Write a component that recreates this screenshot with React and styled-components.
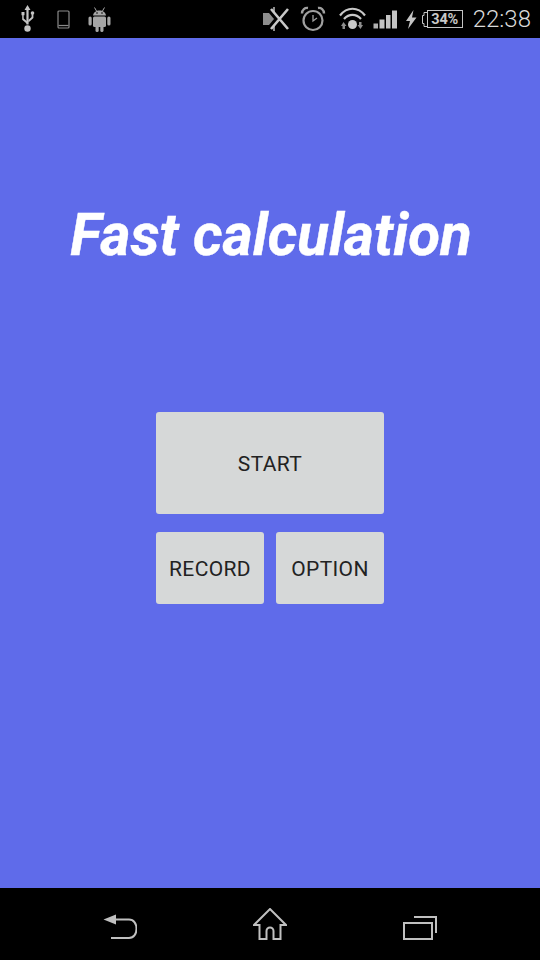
import React from "react";
import styled, { createGlobalStyle } from "styled-components";

const Global = createGlobalStyle`
  html, body { margin: 0; padding: 0; background: #000; }
  #root { width: 540px; height: 960px; }
`;

const Screen = styled.div`
  width: 540px;
  height: 960px;
  display: flex;
  flex-direction: column;
  font-family: Roboto, "Liberation Sans", sans-serif;
  overflow: hidden;
`;

const StatusBar = styled.header`
  height: 38px;
  flex: none;
  box-sizing: border-box;
  background: #000;
  display: flex;
  align-items: center;
  justify-content: space-between;
  padding: 0 9px 0 20px;
  color: #c4c4c4;
`;

const IconGroup = styled.div`
  display: flex;
  align-items: center;
`;

const Slot = styled.svg`
  display: block;
  flex: none;
  margin-left: ${(p) => p.$ml || 0}px;
`;

const BatteryBox = styled.div`
  width: 36px;
  height: 18px;
  border: 1px solid #c4c4c4;
  box-sizing: border-box;
  display: flex;
  align-items: center;
  justify-content: center;
  font-size: 14.500px;
  font-weight: 700;
  color: #c8c8c8;
  letter-spacing: -0.2px;
`;

const BatteryNub = styled.svg`
  display: block;
  flex: none;
  margin-left: 5px;
`;

const Clock = styled.span`
  font-size: 24px;
  font-weight: 300;
  color: #dadada;
  margin-left: 10px;
  line-height: 38px;
`;

const Main = styled.main`
  flex: 1;
  background: #5f6bea;
  display: flex;
  flex-direction: column;
  align-items: center;
`;

const Title = styled.h1`
  margin: 160px 0 0 2px;
  height: 74px;
  line-height: 74px;
  font-size: 58.300px;
  font-weight: 700;
  font-style: italic;
  color: #fff;
  -webkit-text-stroke: 0.4px #fff;
  white-space: nowrap;
`;

const Buttons = styled.div`
  margin-top: 140px;
  width: 228px;
  display: grid;
  grid-template-columns: 108px 108px;
  column-gap: 12px;
  row-gap: 18px;
`;

const Button = styled.button`
  grid-column: ${(p) => (p.$wide ? "1 / -1" : "auto")};
  height: ${(p) => (p.$wide ? 102 : 72)}px;
  padding: 2px 0 0;
  border: 0;
  border-radius: 3px;
  background: #d6d8d8;
  color: #222;
  font-family: Roboto, "Liberation Sans", sans-serif;
  font-size: 21px;
  letter-spacing: 0.35px;
  text-transform: uppercase;
`;

const NavBar = styled.nav`
  height: 72px;
  flex: none;
  box-sizing: border-box;
  background: #000;
  display: flex;
  align-items: flex-end;
  justify-content: space-between;
  padding: 0 103px 20px 103px;
`;

export default function App() {
  return (
    <Screen>
      <Global />
      <StatusBar>
        <IconGroup>
          <Slot width="15" height="28" viewBox="0 0 15 28" fill="#c4c4c4" stroke="none">
            <path d="M7.500 0l3 5H8.600v14.500H6.400V5H4.500z" />
            <circle cx="7.500" cy="23.500" r="3.200" />
            <path d="M1.500 7h3v3.200h-.8v3.300l3.500 3v2.600l-5-4.300V10.200h-.7z" />
            <circle cx="12.500" cy="8" r="1.800" />
            <path d="M11.600 8h1.800v5l-5 4.500v-2.400l3.200-3z" />
          </Slot>
          <Slot $ml={22} width="13" height="19" viewBox="0 0 13 19" fill="none" stroke="#8a8a8a" strokeWidth="1.200">
            <rect x="1" y="1" width="11" height="17" rx="1" />
            <path d="M1.500 15.500h10" />
          </Slot>
          <Slot $ml={18} width="23" height="25" viewBox="0 0 23 25" fill="#a6a6a6">
            <path d="M5 8.500c.4-3 3-5 6.500-5s6.100 2 6.500 5z" />
            <path d="M6.500.5l2 3.500M16.500.5l-2 3.500" stroke="#a6a6a6" strokeWidth="1" />
            <rect x="5" y="9.500" width="13" height="10.500" rx="1.500" />
            <rect x="0.500" y="9.500" width="3.200" height="9" rx="1.600" />
            <rect x="19.300" y="9.500" width="3.200" height="9" rx="1.600" />
            <rect x="7.500" y="18" width="3.200" height="7" rx="1.600" />
            <rect x="12.300" y="18" width="3.200" height="7" rx="1.600" />
            <circle cx="9" cy="6" r=".8" fill="#000" />
            <circle cx="14" cy="6" r=".8" fill="#000" />
          </Slot>
        </IconGroup>
        <IconGroup>
          <Slot width="28" height="26" viewBox="0 0 28 26">
            <path d="M1 7h6l5 6-5 6H1z" fill="#8d8d8d" />
            <path d="M12 1v5M12 20v5" stroke="#8d8d8d" strokeWidth="2" />
            <path d="M9 3l17 20M26 3L9 23" stroke="#c8c8c8" strokeWidth="2.600" fill="none" />
          </Slot>
          <Slot $ml={10} width="26" height="26" viewBox="0 0 26 26" fill="none" stroke="#a0a0a0">
            <circle cx="13" cy="14.500" r="9.500" strokeWidth="2.200" />
            <path d="M13 9v6l4-3" strokeWidth="1.300" />
            <path d="M2 7.500C2 3.500 5 1.500 8 2M24 7.500c0-4-3-6-6-5.500" strokeWidth="2.400" />
          </Slot>
          <Slot $ml={13} width="27" height="24" viewBox="0 0 27 24" fill="none" stroke="#c8c8c8">
            <path d="M1 8.500C8-.5 19-.5 26 8.500" strokeWidth="2.200" />
            <path d="M5 12c5-5.500 12-5.500 17 0" strokeWidth="2.200" />
            <circle cx="13.500" cy="17.500" r="4.500" fill="#c8c8c8" stroke="none" />
            <path d="M4.500 15l3 4H6v3H3.500v-3H2zM21.500 22l-3-4H20v-3h2.500v3H24z" fill="#8e8e8e" stroke="none" />
          </Slot>
          <Slot $ml={7} width="24" height="19" viewBox="0 0 24 19" fill="#c4c4c4">
            <rect x="0.500" y="13.500" width="4.500" height="5" fill="#b0b0b0" />
            <rect x="6.500" y="9.500" width="5" height="9" />
            <rect x="13" y="5" width="4.500" height="13.500" />
            <rect x="19" y="0.500" width="5" height="18" />
          </Slot>
          <Slot $ml={8} width="12" height="19" viewBox="0 0 12 19" fill="#c4c4c4">
            <path d="M8.500 0L1 11h4l-2 8 8.500-11.500H7z" />
          </Slot>
          <BatteryNub width="5" height="15" viewBox="0 0 5 15" fill="none" stroke="#c4c4c4" strokeWidth="1">
            <path d="M5 .5H2v3H.5v8H2v3h3" />
          </BatteryNub>
          <BatteryBox>34%</BatteryBox>
          <Clock>22:38</Clock>
        </IconGroup>
      </StatusBar>
      <Main>
        <Title>Fast calculation</Title>
        <Buttons>
          <Button $wide>Start</Button>
          <Button>Record</Button>
          <Button>Option</Button>
        </Buttons>
      </Main>
      <NavBar>
        <Slot width="34" height="26" viewBox="0 0 34 26" fill="none" stroke="#c0c0c0" strokeWidth="2">
          <path d="M0.500 5.500L13 .5v10z" fill="#c0c0c0" stroke="none" />
          <path d="M12 5.500h14c10 0 10 18.500 0 18.500H8" />
        </Slot>
        <Slot width="34" height="32" viewBox="0 0 34 32" fill="none" stroke="#c0c0c0" strokeWidth="2">
          <path d="M1 17L17 1l16 16h-5.500v14h-7v-8a3.500 3.500 0 0 0-7 0v8h-7V17z" />
        </Slot>
        <Slot width="34" height="24" viewBox="0 0 34 24" fill="none" stroke="#c0c0c0" strokeWidth="2">
          <rect x="1" y="7" width="28" height="16" />
          <path d="M11 1h22v16" />
        </Slot>
      </NavBar>
    </Screen>
  );
}
